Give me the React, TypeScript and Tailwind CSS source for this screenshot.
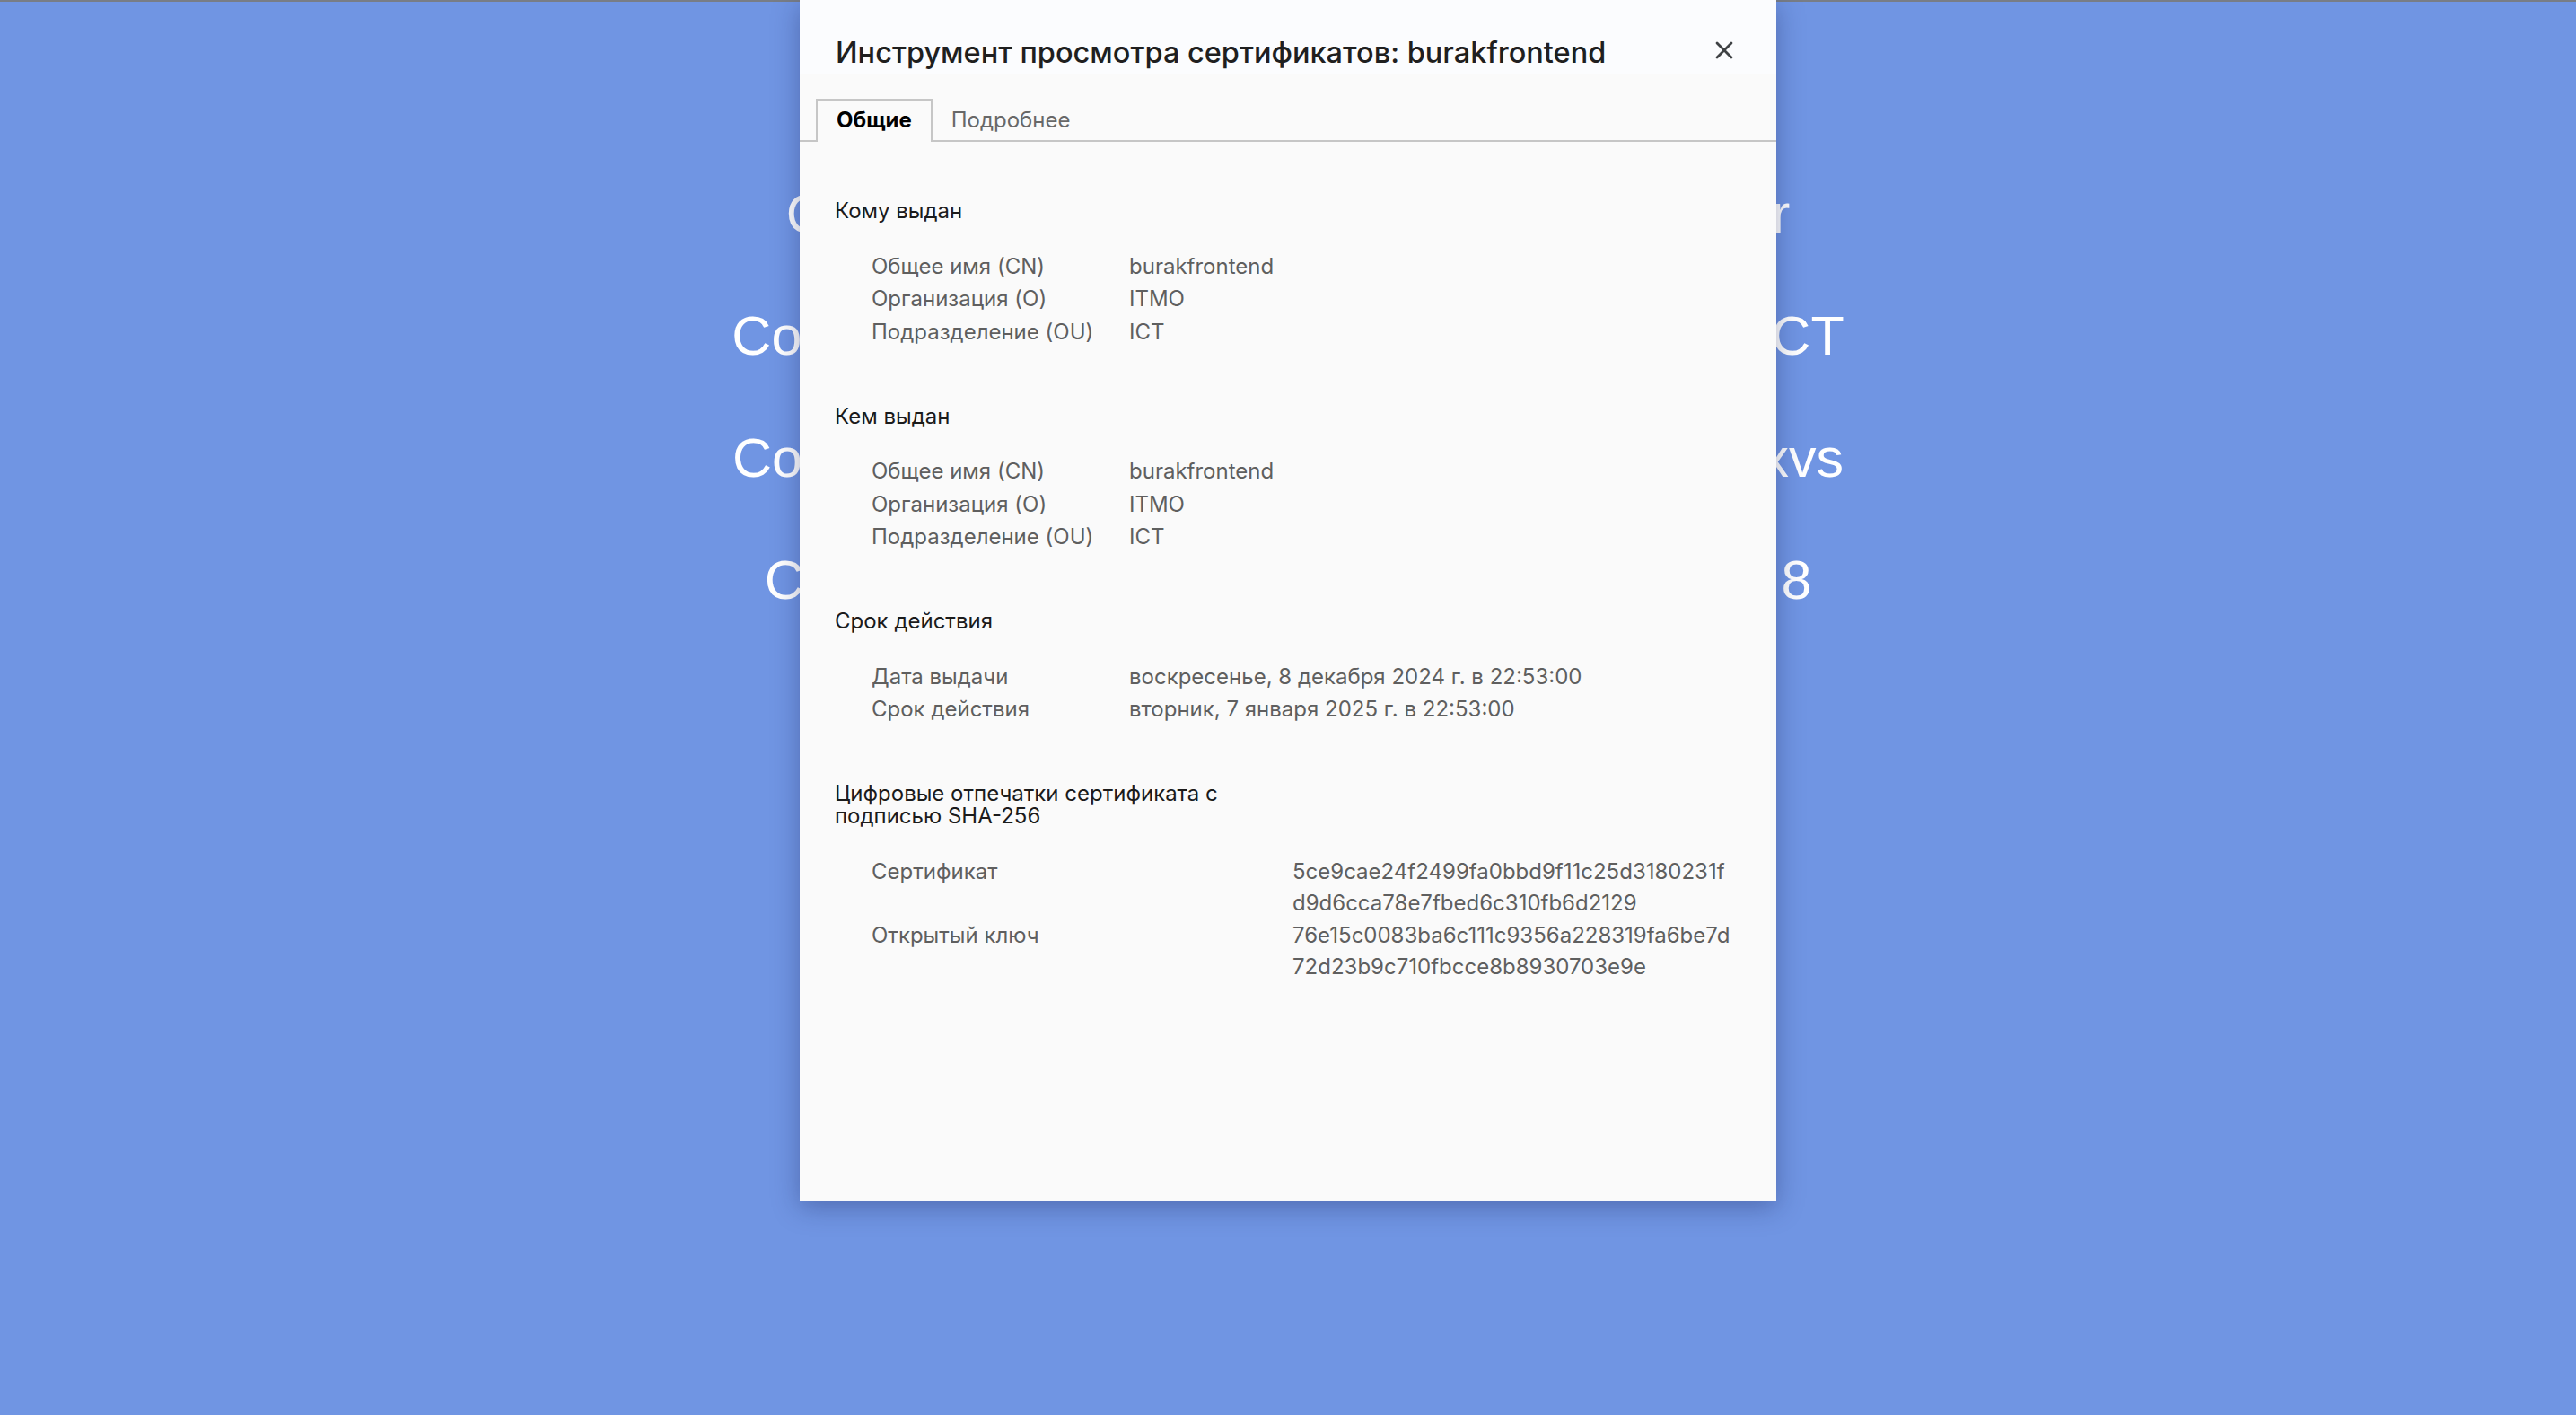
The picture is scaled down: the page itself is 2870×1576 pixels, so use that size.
import { X } from "lucide-react"

type Row = { label: string; value: string | string[] }

type Section = { title: React.ReactNode; rows: Row[]; labelWidth: string; rowLeading: string }

const sections: Section[] = [
  {
    title: "Кому выдан",
    labelWidth: "w-[287px]",
    rowLeading: "leading-[36.5px]",
    rows: [
      { label: "Общее имя (CN)", value: "burakfrontend" },
      { label: "Организация (O)", value: "ITMO" },
      { label: "Подразделение (OU)", value: "ICT" },
    ],
  },
  {
    title: "Кем выдан",
    labelWidth: "w-[287px]",
    rowLeading: "leading-[36.5px]",
    rows: [
      { label: "Общее имя (CN)", value: "burakfrontend" },
      { label: "Организация (O)", value: "ITMO" },
      { label: "Подразделение (OU)", value: "ICT" },
    ],
  },
  {
    title: "Срок действия",
    labelWidth: "w-[287px]",
    rowLeading: "leading-[36.5px]",
    rows: [
      { label: "Дата выдачи", value: "воскресенье, 8 декабря 2024 г. в 22:53:00" },
      { label: "Срок действия", value: "вторник, 7 января 2025 г. в 22:53:00" },
    ],
  },
  {
    title: (
      <>
        Цифровые отпечатки сертификата с
        <br />
        подписью SHA-256
      </>
    ),
    labelWidth: "w-[469px]",
    rowLeading: "leading-[35.5px]",
    rows: [
      {
        label: "Сертификат",
        value: ["5ce9cae24f2499fa0bbd9f11c25d3180231f", "d9d6cca78e7fbed6c310fb6d2129"],
      },
      {
        label: "Открытый ключ",
        value: ["76e15c0083ba6c111c9356a228319fa6be7d", "72d23b9c710fbcce8b8930703e9e"],
      },
    ],
  },
]

// текст страницы за диалогом
const backdropLines = [
  "Common Name (CN): burakfrontend.user",
  "Company (O): ITMO University, Unit (OU) ICT",
  "Connection token: bf7d3a92e6c1f84d052kxvs",
  "Created: 08.12.2024, valid until 7.1.2025, 8",
]

function CertSection({ section, first }: { section: Section; first: boolean }) {
  return (
    <section className={first ? "" : "mt-[62.25px]"}>
      <h3 className="text-[24px] leading-[25px] text-[#1b1b1b]">{section.title}</h3>
      <div className="mt-[31.75px] pl-[41px]">
        {section.rows.map((row) => (
          <div key={row.label} className={`flex text-[24px] ${section.rowLeading} text-[#5f5f5f]`}>
            <div className={`${section.labelWidth} shrink-0`}>{row.label}</div>
            <div>
              {Array.isArray(row.value)
                ? row.value.map((line) => (
                    <span key={line} className="block">
                      {line}
                    </span>
                  ))
                : row.value}
            </div>
          </div>
        ))}
      </div>
    </section>
  )
}

export default function App() {
  return (
    <div className="relative h-screen overflow-hidden bg-[#7095e3] font-['Liberation_Sans',Arial,sans-serif]">
      <div className="h-[2px] bg-[#787d86]" />
      <div className="flex flex-col items-center pt-[168px] text-[61px] leading-[136px] text-white">
        {backdropLines.map((line) => (
          <p key={line} className="whitespace-nowrap">
            {line}
          </p>
        ))}
      </div>

      {/* Диалог просмотра сертификата */}
      <div className="absolute top-0 left-1/2 flex h-[1338px] w-[1088px] -translate-x-1/2 flex-col bg-[#fafafa] font-['Inter','Noto_Sans',sans-serif] shadow-[0_6px_28px_rgba(20,30,80,0.35)]">
        <div className="flex h-[82px] justify-between bg-[#fbfcfe] pl-[40px] pr-[46px]">
          <h2 className="pt-[39px] text-[32.5px] leading-[40px] font-medium text-[#1f1f1f]">
            Инструмент просмотра сертификатов: burakfrontend
          </h2>
          <button className="mt-[44px] h-[24px] w-[24px] text-[#3f4245]">
            <X size={24} strokeWidth={2.1} absoluteStrokeWidth className="scale-[1.33]" />
          </button>
        </div>

        <div className="flex border-b-2 border-[#c6c6c6] bg-[#fafafa] pl-[18px] pt-[28px]">
          <div className="-mb-[2px] h-[48px] border-2 border-b-0 border-[#c6c6c6] bg-[#fafafa] px-[21px] pt-[6px] text-[24px] leading-[32px] font-bold text-black">
            Общие
          </div>
          <div className="h-[46px] px-[21px] pt-[8px] text-[24px] leading-[32px] text-[#686868]">
            Подробнее
          </div>
        </div>

        <div className="flex-1 pl-[39px] pr-[40px] pt-[64px]">
          {sections.map((s, i) => (
            <CertSection key={i} section={s} first={i === 0} />
          ))}
        </div>
      </div>
    </div>
  )
}
